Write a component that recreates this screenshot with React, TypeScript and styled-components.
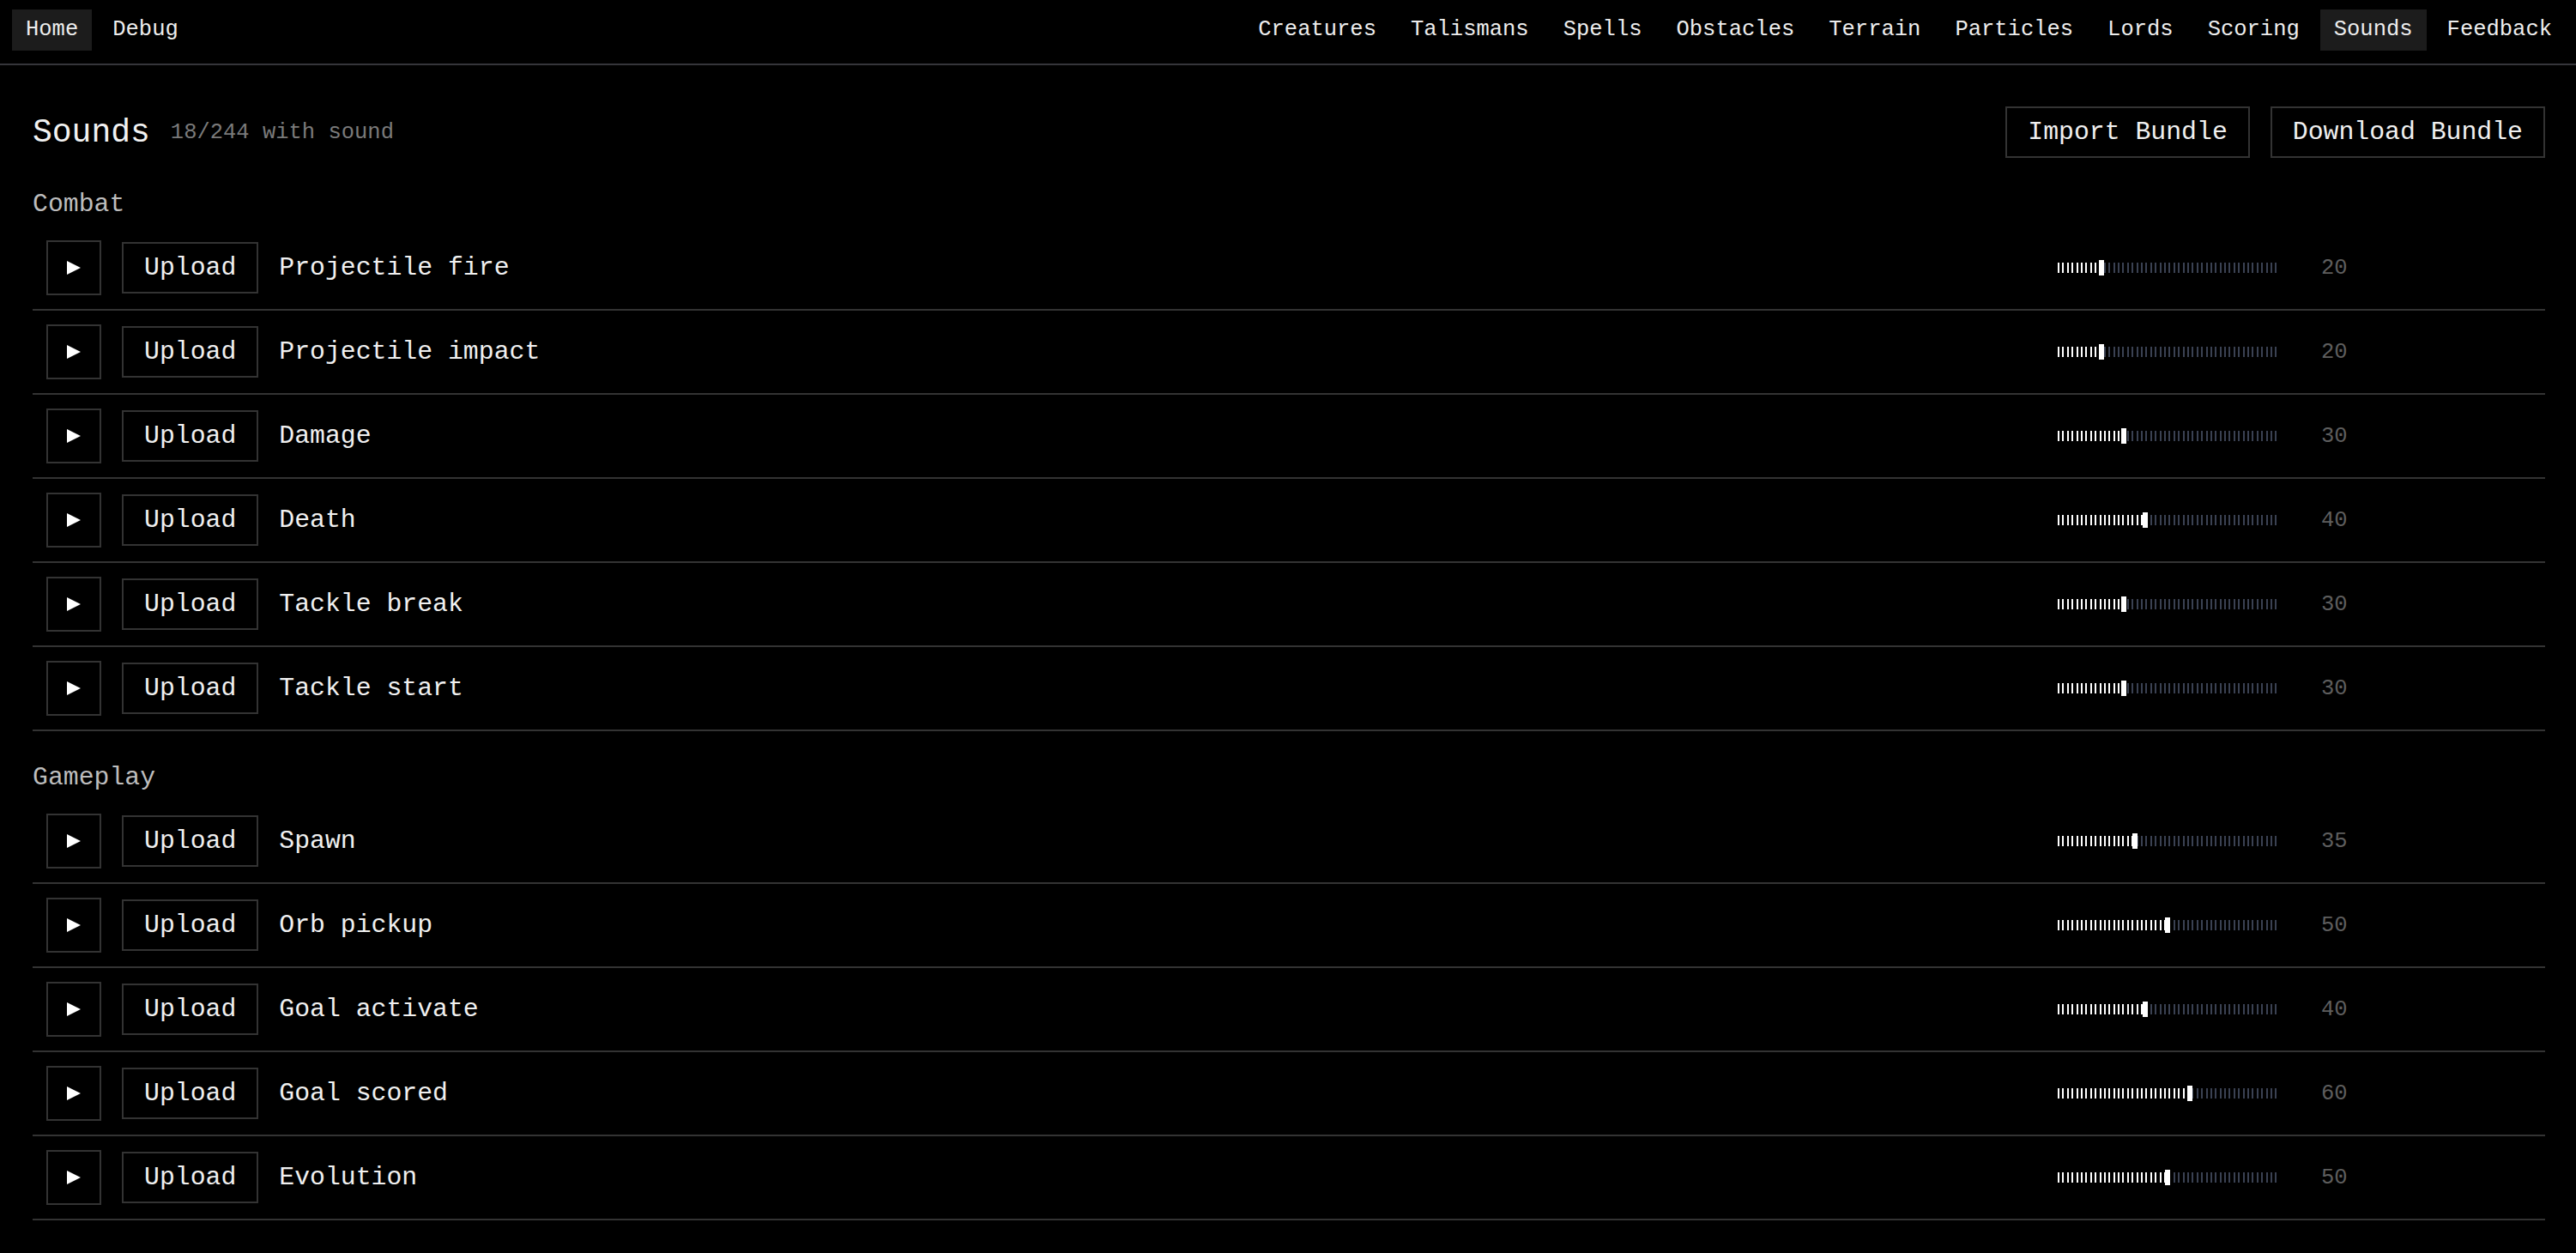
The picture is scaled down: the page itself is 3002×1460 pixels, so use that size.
import React from "react";
import styled, { createGlobalStyle } from "styled-components";

const GlobalStyle = createGlobalStyle`
  html, body {
    margin: 0;
    padding: 0;
    background: #000;
  }
  body {
    font-family: "Liberation Mono", "DejaVu Sans Mono", monospace;
    color: #f0f0f0;
  }
  #root {
    min-height: 100vh;
    background: #000;
  }
`;

const Page = styled.div`
  min-height: 100vh;
  background: #000;
`;

const NavBar = styled.nav`
  display: flex;
  justify-content: space-between;
  align-items: flex-start;
  padding: 11px 12px 15px 14px;
  border-bottom: 2px solid #35353a;
`;

const NavGroup = styled.div`
  display: flex;
  gap: 8px;
`;

const NavLink = styled.a<{ $active?: boolean }>`
  display: block;
  height: 48px;
  line-height: 48px;
  padding: 0 16px;
  font-size: 25.5px;
  color: #ededed;
  text-decoration: none;
  white-space: nowrap;
  background: ${(p) => (p.$active ? "#1c1c1c" : "transparent")};
`;

const Main = styled.main`
  padding: 48px 36px 0 38px;
`;

const TitleRow = styled.div`
  display: flex;
  justify-content: space-between;
  align-items: center;
  height: 60px;
`;

const TitleGroup = styled.div`
  display: flex;
  align-items: center;
  gap: 24px;
`;

const Title = styled.h1`
  margin: 0;
  font-size: 38px;
  font-weight: normal;
  color: #f2f2f2;
`;

const Subtitle = styled.span`
  font-size: 25.5px;
  color: #7a7a7a;
`;

const Actions = styled.div`
  display: flex;
  gap: 24px;
`;

const OutlineButton = styled.button`
  box-sizing: border-box;
  height: 60px;
  padding: 0 24px;
  border: 2px solid #333;
  background: transparent;
  color: #f0f0f0;
  font-family: inherit;
  font-size: 29.8px;
  white-space: nowrap;
  cursor: pointer;
`;

const Section = styled.section`
  margin-top: 36px;
`;

const SectionTitle = styled.h2`
  margin: 0 0 8px;
  font-size: 29.8px;
  line-height: 36px;
  font-weight: normal;
  color: #bdbdbd;
`;

const Row = styled.div`
  display: flex;
  align-items: center;
  padding: 16px 197px 16px 16px;
  border-bottom: 2px solid #333;
`;

const PlayButton = styled.button`
  box-sizing: border-box;
  flex: none;
  width: 64px;
  height: 64px;
  padding: 0;
  margin-right: 24px;
  border: 2px solid #333;
  background: transparent;
  display: flex;
  align-items: center;
  justify-content: center;
  cursor: pointer;
`;

const UploadButton = styled(OutlineButton)`
  flex: none;
  margin-right: 24px;
`;

const Name = styled.span`
  flex: 1;
  font-size: 29.8px;
  color: #f0f0f0;
  white-space: nowrap;
`;

const Track = styled.div`
  position: relative;
  flex: none;
  width: 256px;
  height: 18px;
  display: flex;
  align-items: center;
  justify-content: space-between;
`;

const Tick = styled.span<{ $on: boolean }>`
  flex: none;
  width: 2px;
  height: 12px;
  background: ${(p) => (p.$on ? "#ffffff" : "#3a4152")};
`;

const Thumb = styled.span`
  position: absolute;
  top: 0;
  width: 6px;
  height: 18px;
  background: #fff;
  transform: translateX(-50%);
`;

const Value = styled.span`
  flex: none;
  width: 64px;
  margin-left: 51px;
  font-size: 25.5px;
  color: #5e5e5e;
`;

const TICKS = 48;
const TRACK_W = 256;

const VolumeSlider: React.FC<{ value: number }> = ({ value }) => {
  const pos = (value / 100) * TRACK_W;
  const step = (TRACK_W - 2) / (TICKS - 1);
  return (
    <Track>
      {Array.from({ length: TICKS }, (_, i) => (
        <Tick key={i} $on={i * step + 1 <= pos} />
      ))}
      <Thumb style={{ left: `${pos}px` }} />
    </Track>
  );
};

const PlayIcon = () => (
  <svg width="16" height="16" viewBox="0 0 16 16">
    <polygon points="0,0 16,8 0,16" fill="#fff" />
  </svg>
);

const leftNav = ["Home", "Debug"];
const rightNav = [
  "Creatures",
  "Talismans",
  "Spells",
  "Obstacles",
  "Terrain",
  "Particles",
  "Lords",
  "Scoring",
  "Sounds",
  "Feedback",
];

const sections: { title: string; items: [string, number][] }[] = [
  {
    title: "Combat",
    items: [
      ["Projectile fire", 20],
      ["Projectile impact", 20],
      ["Damage", 30],
      ["Death", 40],
      ["Tackle break", 30],
      ["Tackle start", 30],
    ],
  },
  {
    title: "Gameplay",
    items: [
      ["Spawn", 35],
      ["Orb pickup", 50],
      ["Goal activate", 40],
      ["Goal scored", 60],
      ["Evolution", 50],
    ],
  },
];

export default function App() {
  return (
    <Page>
      <GlobalStyle />
      <NavBar>
        <NavGroup>
          {leftNav.map((n) => (
            <NavLink key={n} $active={n === "Home"}>
              {n}
            </NavLink>
          ))}
        </NavGroup>
        <NavGroup>
          {rightNav.map((n) => (
            <NavLink key={n} $active={n === "Sounds"}>
              {n}
            </NavLink>
          ))}
        </NavGroup>
      </NavBar>
      <Main>
        <TitleRow>
          <TitleGroup>
            <Title>Sounds</Title>
            <Subtitle>18/244 with sound</Subtitle>
          </TitleGroup>
          <Actions>
            <OutlineButton>Import Bundle</OutlineButton>
            <OutlineButton>Download Bundle</OutlineButton>
          </Actions>
        </TitleRow>
        {sections.map((s) => (
          <Section key={s.title}>
            <SectionTitle>{s.title}</SectionTitle>
            {s.items.map(([name, v]) => (
              <Row key={name}>
                <PlayButton aria-label="Play">
                  <PlayIcon />
                </PlayButton>
                <UploadButton>Upload</UploadButton>
                <Name>{name}</Name>
                <VolumeSlider value={v} />
                <Value>{v}</Value>
              </Row>
            ))}
          </Section>
        ))}
      </Main>
    </Page>
  );
}
